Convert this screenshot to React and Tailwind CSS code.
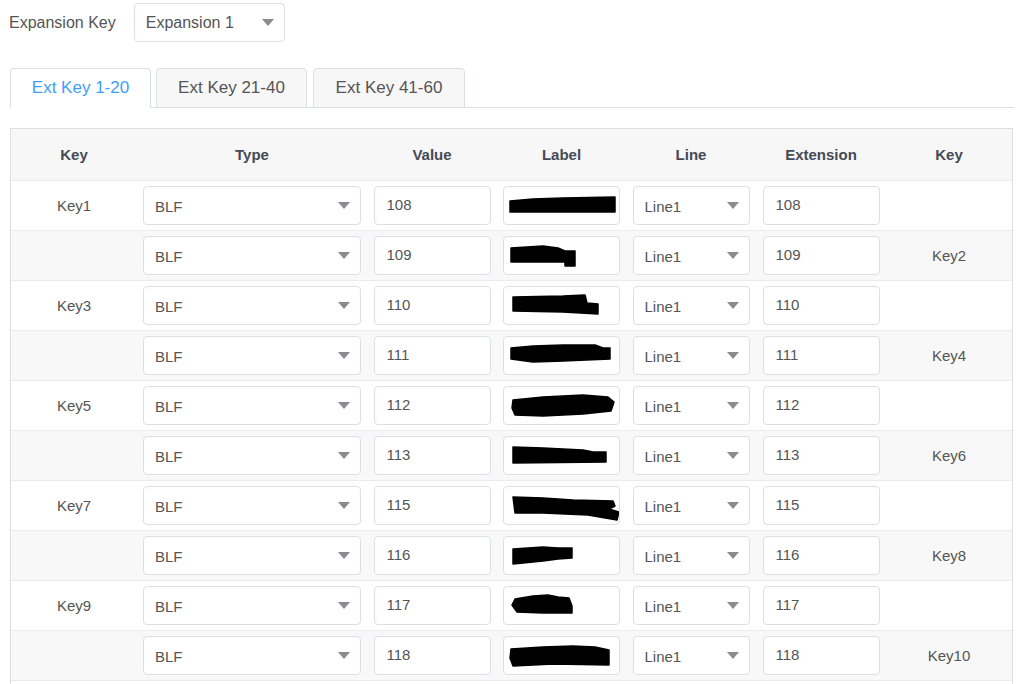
import React from "react";

const FONT = { fontFamily: '"Liberation Sans", Arial, sans-serif' };

const Caret = ({ className = "" }) => (
  <svg width="12" height="7" viewBox="0 0 12 7" className={className}>
    <polygon points="0,0 12,0 6,7" fill="#8a8a90" />
  </svg>
);

const Select = ({ value, width, height = 39, textClass = "text-[15px]", padL = 11 }) => (
  <div
    className={`flex items-center justify-between rounded-[4px] border border-[#dcdfe6] bg-white pr-[10px] ${textClass} text-[#555]`}
    style={{ width, height, paddingLeft: padL }}
  >
    <span className="pt-[3px]">{value}</span>
    <Caret />
  </div>
);

const Input = ({ value }) => (
  <div className="flex h-[39px] w-[117px] items-center rounded-[4px] border border-[#dcdfe6] bg-white pl-[12px] text-[15px] text-[#555]">
    <span className="-mt-[1px]">{value}</span>
  </div>
);

const REDACT = [
  "7,15 30,13 60,12 112,11 112,26 7,26",
  "8,12 40,10 55,12 62,15 72,15 72,30 62,30 62,26 8,26",
  "10,11 60,10 82,9 84,17 95,18 95,28 60,26 10,25",
  "8,12 30,10 60,9 92,9 100,12 107,12 107,23 60,25 30,26 8,23",
  "10,14 40,11 80,9 105,11 111,16 108,25 80,28 40,30 12,29 9,22",
  "10,11 40,12 80,14 90,16 103,16 103,26 10,27",
  "10,11 40,12 70,14 110,15 112,20 106,23 116,26 114,34 85,29 40,27 12,27",
  "10,13 40,11 55,12 69,12 69,22 55,23 40,25 10,28",
  "12,13 30,10 45,9 55,11 66,12 69,20 69,27 40,27 14,26 9,19",
  "8,13 40,11 70,10 92,11 106,14 106,29 50,28 10,30 7,22",
];

const Label = ({ shape }) => (
  <div className="h-[39px] w-[117px] overflow-hidden rounded-[4px] border border-[#dcdfe6] bg-white">
    <svg width="117" height="39" viewBox="1 1 117 39" className="block">
      <polygon points={shape} fill="#000" strokeLinejoin="round" stroke="#000" strokeWidth="1.5" />
    </svg>
  </div>
);

const VALUES = [108, 109, 110, 111, 112, 113, 115, 116, 117, 118];

const COLS = "grid grid-cols-[126px_230px_130px_129px_130px_130px_1fr]";

export default function App() {
  return (
    <div className="min-h-screen bg-white pl-[10px] pt-[3px]" style={FONT}>
      <div className="flex items-center">
        <span className="-ml-[1px] text-[16px] text-[#555]">Expansion Key</span>
        <div className="ml-[18px]">
          <div className="flex h-[39px] w-[151px] items-center justify-between rounded-[4px] border border-[#dcdfe6] bg-white pl-[11px] pr-[10px] text-[16px] text-[#555]">
            <span>Expansion 1</span>
            <Caret />
          </div>
        </div>
      </div>

      <div className="mt-[26px] flex w-[1004px] gap-[5px] border-b border-[#dcdfe6]">
        <div className="-mb-px flex h-[40px] w-[141px] items-center justify-center rounded-t-[4px] border border-[#dcdfe6] border-b-white bg-white text-[17px] text-[#409eff]">
          Ext Key 1-20
        </div>
        <div className="-mb-px flex h-[40px] w-[151px] items-center justify-center rounded-t-[4px] border border-[#dcdfe6] bg-[#f7f7f7] text-[17px] text-[#555]">
          Ext Key 21-40
        </div>
        <div className="-mb-px ml-[1px] flex h-[40px] w-[152px] items-center justify-center rounded-t-[4px] border border-[#dcdfe6] bg-[#f7f7f7] text-[17px] text-[#555]">
          Ext Key 41-60
        </div>
      </div>

      <div className="mt-[20px] w-[1003px] border-l border-r border-t border-[#dfdfdf]">
        <div className={`${COLS} h-[51px] items-center bg-[#f7f7f7] pt-[2px] text-[15px] font-bold text-[#454a55]`}>
          <div className="text-center">Key</div>
          <div className="text-center">Type</div>
          <div className="text-center">Value</div>
          <div className="text-center">Label</div>
          <div className="text-center">Line</div>
          <div className="text-center">Extension</div>
          <div className="text-center">Key</div>
        </div>
        {VALUES.map((v, i) => {
          const odd = i % 2 === 0;
          return (
            <div
              key={i}
              className={`${COLS} h-[50px] items-center border-t border-[#ebebeb] ${odd ? "bg-white" : "bg-[#f8f8f8]"}`}
            >
              <div className="pt-[1px] text-center text-[15px] text-[#555]">{odd ? `Key${i + 1}` : ""}</div>
              <div className="flex justify-center">
                <Select value="BLF" width={218} />
              </div>
              <div className="flex justify-center">
                <Input value={v} />
              </div>
              <div className="flex justify-center">
                <Label shape={REDACT[i]} />
              </div>
              <div className="flex justify-center">
                <Select value="Line1" width={117} />
              </div>
              <div className="flex justify-center">
                <Input value={v} />
              </div>
              <div className="pt-[1px] text-center text-[15px] text-[#555]">{odd ? "" : `Key${i + 1}`}</div>
            </div>
          );
        })}
        <div className="h-[40px] border-t border-[#ebebeb] bg-white" />
      </div>
    </div>
  );
}
